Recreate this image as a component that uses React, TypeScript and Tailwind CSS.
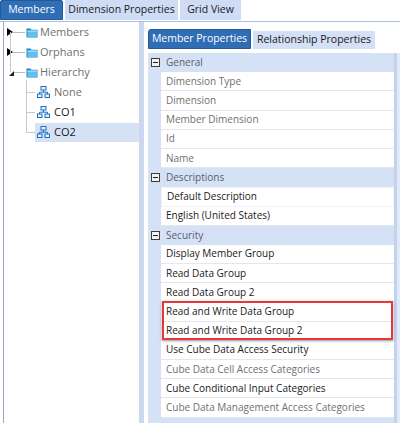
import React from "react";

const FONT = { fontFamily: '"Open Sans", "Noto Sans", sans-serif' };

function Folder() {
  return (
    <svg width="12" height="11" viewBox="0 0 12 11" className="shrink-0">
      <path d="M0.5 1.5h4l1 1.2h6v7.8h-11z" fill="#1b86c9" />
      <path d="M1.5 3.5h9.5v6.5h-9.5z" fill="#5fc0f0" />
      <path d="M1.5 3.5h9.5v1.2h-9.5z" fill="#a9e0fb" />
    </svg>
  );
}

function HierIcon() {
  return (
    <svg width="13" height="12" viewBox="0 0 13 12" className="shrink-0">
      <rect x="4" y="0.5" width="5" height="3.5" fill="#dff0ff" stroke="#1f6fc0" />
      <path d="M6.5 4v2.2M2.5 8V6.2h8V8" stroke="#1f6fc0" fill="none" />
      <rect x="0.5" y="8" width="4.5" height="3.5" fill="#dff0ff" stroke="#1f6fc0" />
      <rect x="8" y="8" width="4.5" height="3.5" fill="#dff0ff" stroke="#1f6fc0" />
    </svg>
  );
}

function Collapse() {
  return (
    <span className="w-[9px] h-[9px] border border-[#3c3c3c] bg-[#f2f2f2] flex items-center justify-center shrink-0">
      <span className="w-[5px] h-[1px] bg-[#222]" />
    </span>
  );
}

type Row = { label: string; ro?: boolean; focus?: boolean };

function Category({ name }: { name: string }) {
  return (
    <div className="h-[19.2px] flex items-center gap-[6px] pl-[3px] bg-[#d5e1f5] text-[#56616f]">
      <Collapse />
      <span>{name}</span>
    </div>
  );
}

function Prop({ row }: { row: Row }) {
  return (
    <div className="h-[19.2px] flex">
      <div className="w-[13px] shrink-0 bg-[#d5e1f5]" />
      <div
        className={`flex-1 flex items-center bg-white border-b border-[#e2e8f2] pl-[5px] whitespace-nowrap ${
          row.ro ? "text-[#707070]" : "text-[#1a1a1a]"
        } ${row.focus ? "border border-dotted border-[#555] pl-[4px]" : ""}`}
      >
        {row.label}
      </div>
    </div>
  );
}

export default function App() {
  return (
    <div className="w-[400px] h-[423px] overflow-hidden bg-white text-[10px] flex flex-col" style={FONT}>
      {/* main tabs */}
      <div className="h-[22px] flex items-start gap-[2px] shrink-0 border-b border-[#aabfe2]">
        <div className="w-[63px] h-[20px] flex items-center justify-center bg-[#2f6db5] text-white rounded-t-[2px] border border-[#27599a] text-[10.5px] whitespace-nowrap">
          Members
        </div>
        <div className="w-[113px] h-[20px] flex items-center justify-center bg-[#cfdcf5] text-[#1a1a1a] text-[10.5px] whitespace-nowrap">
          Dimension Properties
        </div>
        <div className="w-[61px] h-[20px] flex items-center justify-center bg-[#cfdcf5] text-[#1a1a1a] text-[10.5px] whitespace-nowrap">
          Grid View
        </div>
      </div>

      <div className="flex-1 flex min-h-0">
        {/* tree */}
        <div className="w-[137px] shrink-0 ml-[3px] border-l border-[#95a5c9] border-r border-r-[#d6d6d6] relative">
          <div className="absolute left-[6px] top-[10px] h-[40px] border-l border-[#c8c8c8]" />
          <div className="absolute left-[22px] top-[58px] h-[52px] border-l border-[#c8c8c8]" />
          {["Members", "Orphans"].map((n) => (
            <div key={n} className="h-[20px] flex items-center">
              <span className="w-[3px]" />
              <span className="w-0 h-0 border-y-[4px] border-y-transparent border-l-[6px] border-l-black" />
              <span className="w-[12px] h-[1px] bg-[#b9b9b9]" />
              <span className="ml-[1px]"><Folder /></span>
              <span className="ml-[2px] text-[#707070] text-[11px]">{n}</span>
            </div>
          ))}
          <div className="h-[20px] flex items-center">
            <span className="w-[5px]" />
            <span className="w-0 h-0 border-b-[5px] border-b-[#222] border-l-[5px] border-l-transparent mt-[3px]" />
            <span className="w-[11px] h-[1px] bg-[#b9b9b9]" />
            <span className="ml-[1px]"><Folder /></span>
            <span className="ml-[2px] text-[#707070] text-[11px]">Hierarchy</span>
          </div>
          {["None", "CO1", "CO2"].map((c) => (
            <div key={c} className="h-[20px] flex items-center">
              <span className="w-[22px]" />
              <span className="w-[9px] h-[1px] bg-[#c8c8c8]" />
              <div
                className={`flex-1 h-[19px] flex items-center gap-[4px] pl-[2px] ${
                  c === "CO2" ? "bg-[#d5e2f6]" : ""
                }`}
              >
                <HierIcon />
                <span className={`text-[11px] ${c === "None" ? "text-[#707070]" : "text-[#1a1a1a]"}`}>{c}</span>
              </div>
            </div>
          ))}
        </div>

        {/* splitter */}
        <div className="w-[4px] shrink-0 bg-[#c9d7f0]" />

        {/* right panel */}
        <div className="flex-1 flex flex-col pl-[4px] min-w-0">
          <div className="h-[31px] flex items-end gap-[2px] pb-[4px] shrink-0">
            <div className="w-[103px] h-[20px] flex items-center justify-center bg-[#2f6db5] text-white rounded-tl-[3px] border border-[#27599a] text-[10.5px] whitespace-nowrap shrink-0">
              Member Properties
            </div>
            <div className="w-[122px] h-[18px] flex items-center justify-center bg-[#d3e0f6] text-[#1a1a1a] text-[10.5px] whitespace-nowrap shrink-0">
              Relationship Properties
            </div>
          </div>

          <div className="flex-1 flex bg-[#d5e1f5] min-h-0">
            <div className="w-[246px] shrink-0">
              <Category name="General" />
              {[
                { label: "Dimension Type", ro: true },
                { label: "Dimension", ro: true },
                { label: "Member Dimension", ro: true },
                { label: "Id", ro: true },
                { label: "Name", ro: true },
              ].map((r) => (
                <Prop key={r.label} row={r} />
              ))}
              <Category name="Descriptions" />
              <Prop row={{ label: "Default Description", focus: true }} />
              <Prop row={{ label: "English (United States)" }} />
              <Category name="Security" />
              <Prop row={{ label: "Display Member Group" }} />
              <Prop row={{ label: "Read Data Group" }} />
              <Prop row={{ label: "Read Data Group 2" }} />
              <div className="relative">
                <Prop row={{ label: "Read and Write Data Group" }} />
                <Prop row={{ label: "Read and Write Data Group 2" }} />
                <div className="absolute left-[14px] right-[1px] top-[-1px] bottom-[1px] border-2 border-[#e8363b] shadow-[0_1px_3px_rgba(0,0,0,0.35)]" />
              </div>
              <Prop row={{ label: "Use Cube Data Access Security" }} />
              <Prop row={{ label: "Cube Data Cell Access Categories", ro: true }} />
              <Prop row={{ label: "Cube Conditional Input Categories" }} />
              <Prop row={{ label: "Cube Data Management Access Categories", ro: true }} />
            </div>
            <div className="w-[3px] shrink-0 bg-[#c3d2ee]" />
            <div className="flex-1 bg-[#e3eaf7]" />
          </div>
        </div>
      </div>
    </div>
  );
}
